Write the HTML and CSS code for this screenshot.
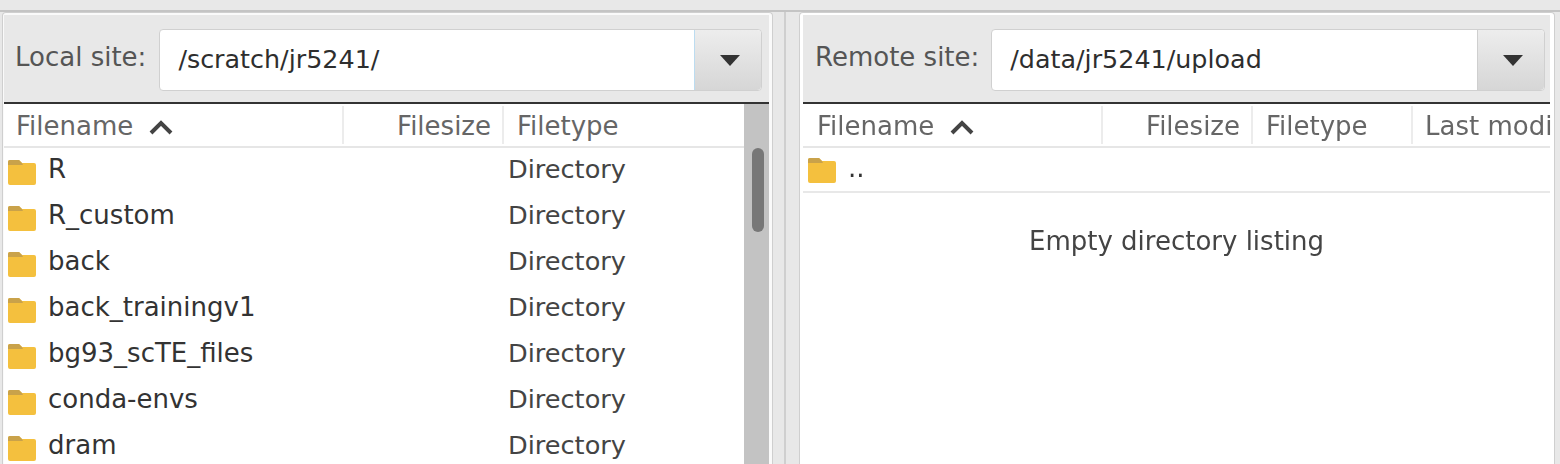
FILE: index.html
```html
<!DOCTYPE html>
<html lang="en">
<head>
  <meta charset="UTF-8" />
  <title>Site manager panes</title>
  <link rel="stylesheet" href="styles.css">
</head>
<body>
  <svg width="0" height="0" class="defs">
    <symbol id="folder" viewBox="0 0 28 25">
      <path d="M0 2 Q0 0 2 0 H11 L14 3 H26 Q28 3 28 5 V23 Q28 25 26 25 H2 Q0 25 0 23 Z" fill="#f4c03e"/>
      <path d="M0 2 Q0 0 2 0 H11 L14 3 L15 5 H0 Z" fill="#c9a24a"/>
    </symbol>
    <symbol id="caret" viewBox="0 0 20 11">
      <path d="M0 0 H20 L10 11 Z" fill="#333"/>
    </symbol>
    <symbol id="sort" viewBox="0 0 26 16">
      <path d="M3 14 L13 4 L23 14" fill="none" stroke="#444" stroke-width="4"/>
    </symbol>
  </svg>

  <div class="panes">
    <section class="pane pane-local">
      <div class="site-bar">
        <label>Local site:</label>
        <div class="combo">
          <span class="combo-value">/scratch/jr5241/</span>
          <span class="combo-btn combo-btn-focus"><svg class="caret"><use href="#caret"/></svg></span>
        </div>
      </div>
      <div class="list">
        <div class="list-main">
          <div class="head">
            <span class="col col-name">Filename <svg class="sort"><use href="#sort"/></svg></span>
            <span class="col col-size">Filesize</span>
            <span class="col col-type">Filetype</span>
          </div>
          <div class="row"><span class="col col-name"><svg class="folder"><use href="#folder"/></svg>R</span><span class="col col-size"></span><span class="col col-type">Directory</span></div>
          <div class="row"><span class="col col-name"><svg class="folder"><use href="#folder"/></svg>R_custom</span><span class="col col-size"></span><span class="col col-type">Directory</span></div>
          <div class="row"><span class="col col-name"><svg class="folder"><use href="#folder"/></svg>back</span><span class="col col-size"></span><span class="col col-type">Directory</span></div>
          <div class="row"><span class="col col-name"><svg class="folder"><use href="#folder"/></svg>back_trainingv1</span><span class="col col-size"></span><span class="col col-type">Directory</span></div>
          <div class="row"><span class="col col-name"><svg class="folder"><use href="#folder"/></svg>bg93_scTE_files</span><span class="col col-size"></span><span class="col col-type">Directory</span></div>
          <div class="row"><span class="col col-name"><svg class="folder"><use href="#folder"/></svg>conda-envs</span><span class="col col-size"></span><span class="col col-type">Directory</span></div>
          <div class="row"><span class="col col-name"><svg class="folder"><use href="#folder"/></svg>dram</span><span class="col col-size"></span><span class="col col-type">Directory</span></div>
        </div>
        <div class="scrollbar"><div class="thumb"></div></div>
      </div>
    </section>

    <div class="sash"></div>

    <section class="pane pane-remote">
      <div class="site-bar">
        <label>Remote site:</label>
        <div class="combo">
          <span class="combo-value">/data/jr5241/upload</span>
          <span class="combo-btn"><svg class="caret"><use href="#caret"/></svg></span>
        </div>
      </div>
      <div class="list">
        <div class="list-main">
          <div class="head">
            <span class="col col-name">Filename <svg class="sort"><use href="#sort"/></svg></span>
            <span class="col col-size">Filesize</span>
            <span class="col col-type">Filetype</span>
            <span class="col col-date">Last modi</span>
          </div>
          <div class="row row-up"><span class="col col-name"><svg class="folder"><use href="#folder"/></svg>..</span></div>
          <p class="empty">Empty directory listing</p>
        </div>
      </div>
    </section>
  </div>
</body>
</html>
```

FILE: styles.css
```css
html, body {
  margin: 0;
  height: 464px;
  overflow: hidden;
}
body {
  background: #e8e8e8;
  font-family: "DejaVu Sans", sans-serif;
  font-size: 26px;
  color: #333;
}
.defs {
  display: block;
  height: 0;
}
.panes {
  display: flex;
  height: 454px;
  margin-top: 10px;
  padding-left: 2px;
  border-top: 2px solid #c4c4c4;
  filter: blur(0.6px);
}
.pane {
  background: #fafafa;
  border: 1px solid #cfcfcf;
  border-bottom: 0;
  border-radius: 4px 4px 0 0;
  padding-top: 2px;
  overflow: hidden;
  box-sizing: border-box;
}
.pane-local {
  width: 771px;
  padding-left: 1px;
  padding-right: 3px;
}
.pane-remote {
  width: 756px;
  padding-left: 3px;
  padding-right: 4px;
  background: #fff;
}
.sash {
  width: 26px;
}
.sash::after {
  content: "";
  display: block;
  width: 2px;
  height: 100%;
  margin-left: 11px;
  background: #cfcfcf;
}

/* site bar */
.site-bar {
  display: flex;
  align-items: center;
  height: 87px;
  background: #e8e8e8;
  border-bottom: 2px solid #333;
  padding-left: 11px;
}
.pane-remote .site-bar {
  padding-left: 12px;
}
.site-bar label {
  color: #555;
  margin-right: 13px;
  margin-top: -4px;
}
.pane-remote .site-bar label {
  margin-right: 12px;
}
.combo {
  display: flex;
  height: 62px;
  flex: 1;
  margin-right: 7px;
  margin-top: 3px;
  background: #fff;
  border: 1px solid #d0d0d0;
  border-radius: 4px;
  box-sizing: border-box;
}
.pane-remote .combo {
  margin-right: 5px;
}
.combo-value {
  flex: 1;
  padding-left: 18px;
  font-size: 25.4px;
  line-height: 58px;
  color: #2e2e2e;
}
.combo-btn {
  width: 66px;
  display: flex;
  align-items: center;
  justify-content: center;
  background: linear-gradient(#ededed, #d6d6d6);
  border-left: 1px solid #cfcfcf;
  border-radius: 0 4px 4px 0;
}
.combo-btn-focus {
  border-left-color: #bcdcf0;
}
.caret {
  width: 20px;
  height: 11px;
  margin-left: 3px;
}

/* file list */
.list {
  display: flex;
  height: 360px;
  background: #fff;
}
.list-main {
  flex: 1;
  min-width: 0;
}
.head {
  display: flex;
  height: 42px;
  align-items: center;
  border-bottom: 2px solid #e6e6e6;
  color: #666;
  white-space: nowrap;
}
.head .col {
  height: 38px;
  line-height: 40px;
  border-right: 2px solid #ececec;
}
.row {
  display: flex;
  height: 46px;
  padding-bottom: 4px;
  align-items: center;
  white-space: nowrap;
  box-sizing: border-box;
}
.col {
  display: block;
  flex: none;
  box-sizing: border-box;
}
.col-name {
  width: 340px;
  padding-left: 12px;
}
.col-size {
  width: 160px;
  padding-right: 11px;
  text-align: right;
}
.col-type {
  width: 240px;
  padding-left: 4px;
  font-size: 25.6px;
  color: #444;
}
.head .col-type {
  padding-left: 13px;
  font-size: 26px;
  color: #666;
}
.head .col-date,
.pane-local .head .col-type {
  border-right: 0;
}
.pane-remote .col-name {
  width: 300px;
  padding-left: 14px;
}
.pane-remote .col-size {
  width: 150px;
}
.pane-remote .col-type {
  width: 160px;
}
.col-date {
  padding-left: 12px;
}
.row .col-name,
.pane-remote .row .col-name {
  display: flex;
  align-items: center;
  padding-left: 4px;
  color: #333;
}
.pane-remote .row .col-name {
  padding-left: 5px;
}
.folder {
  width: 28px;
  height: 25px;
  margin-top: 6px;
  margin-right: 12px;
  flex: none;
}
.sort {
  width: 26px;
  height: 16px;
  margin-left: 6px;
}
.row-up {
  border-bottom: 2px solid #e8e8e8;
  height: 45px;
}
.empty {
  margin: 33px 0 0;
  text-align: center;
  color: #444;
}
.scrollbar {
  width: 25px;
  background: #c3c3c3;
  flex: none;
  padding-top: 44px;
  box-sizing: border-box;
}
.thumb {
  width: 12px;
  height: 84px;
  margin-left: 8px;
  background: #777;
  border-radius: 6px;
}
```
